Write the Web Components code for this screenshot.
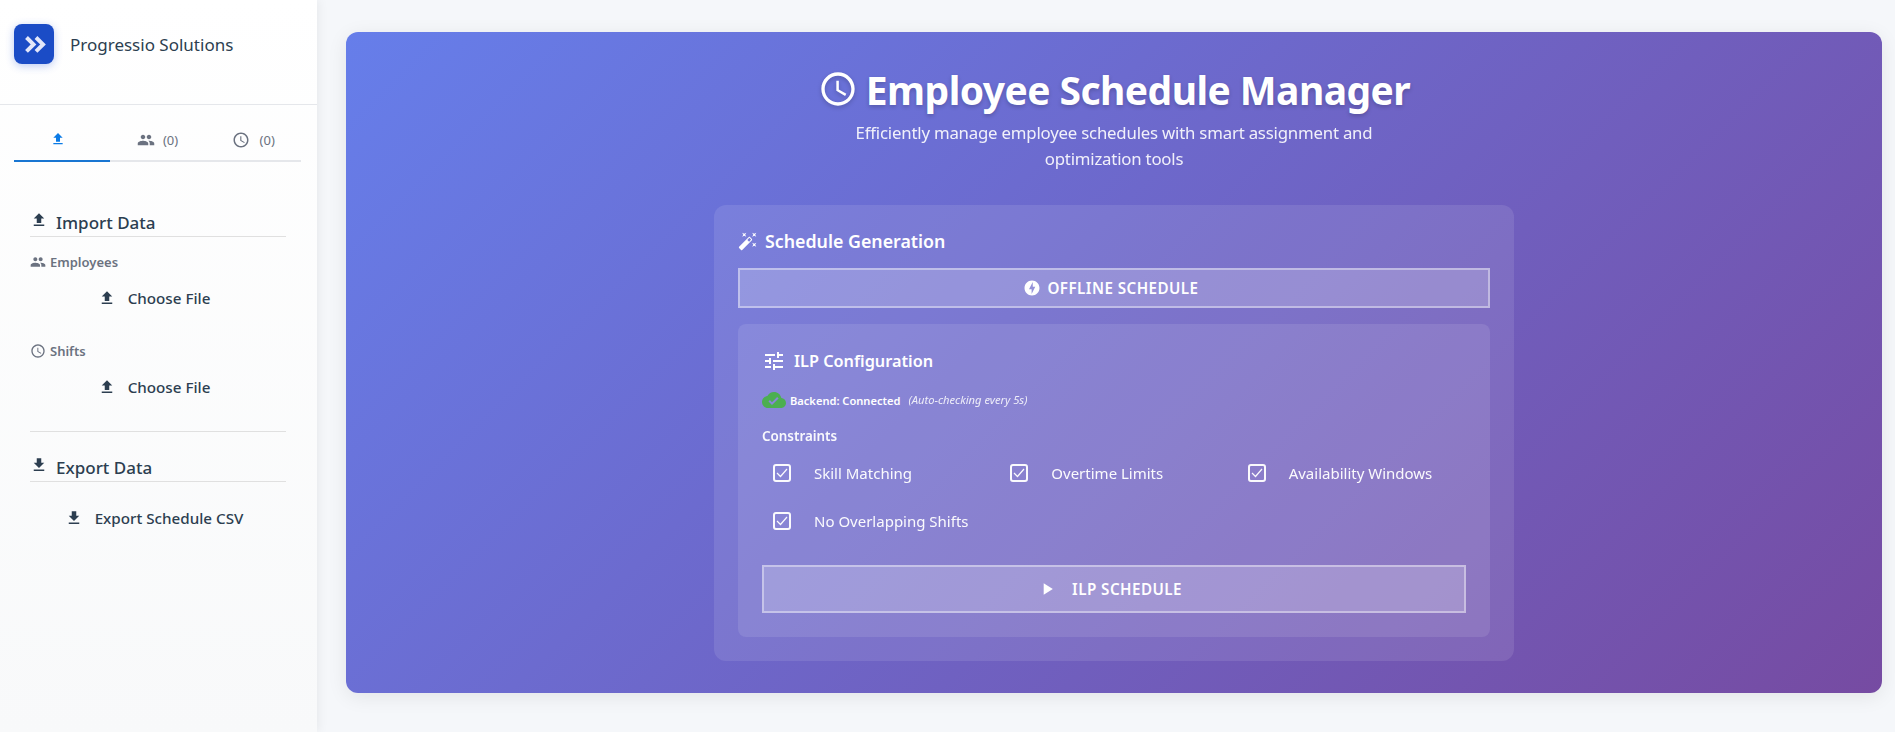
<!DOCTYPE html>
<html>
<head>
<meta charset="utf-8">
<title>Employee Schedule Manager</title>
<style>
    html, body { margin: 0; height: 100%; }
    body {
        font-family: "Noto Sans", "Open Sans", "Liberation Sans", sans-serif;
        color: #2c3e50;
        background: #f5f7fa;
        overflow: hidden;
    }
</style>
</head>
<body>
<schedule-app></schedule-app>

<script>
const ICONS = {
    upload: 'M9 16h6v-6h4l-7-7-7 7h4zm-4 2h14v2H5z',
    download: 'M5 20h14v-2H5v2zM19 9h-4V3H9v6H5l7 7 7-7z',
    people: 'M16 11c1.66 0 2.99-1.34 2.99-3S17.66 5 16 5c-1.66 0-3 1.34-3 3s1.34 3 3 3zm-8 0c1.66 0 2.99-1.34 2.99-3S9.66 5 8 5C6.34 5 5 6.34 5 8s1.34 3 3 3zm0 2c-2.33 0-7 1.17-7 3.5V19h14v-2.5c0-2.33-4.67-3.5-7-3.5zm8 0c-.29 0-.62.02-.97.05 1.16.84 1.97 1.97 1.97 3.45V19h6v-2.5c0-2.33-4.67-3.5-7-3.5z',
    clock: 'M11.99 2C6.47 2 2 6.48 2 12s4.47 10 9.99 10C17.52 22 22 17.52 22 12S17.52 2 11.99 2zM12 20c-4.42 0-8-3.58-8-8s3.58-8 8-8 8 3.58 8 8-3.58 8-8 8zm.5-13H11v6l5.25 3.15.75-1.23-4.5-2.67z',
    wand: 'M7.5 5.6L10 7 8.6 4.5 10 2 7.5 3.4 5 2l1.4 2.5L5 7zm12 9.8L17 14l1.4 2.5L17 19l2.5-1.4L22 19l-1.4-2.5L22 14zM22 2l-2.5 1.4L17 2l1.4 2.5L17 7l2.5-1.4L22 7l-1.4-2.5zm-7.63 5.29c-.39-.39-1.02-.39-1.41 0L1.29 18.96c-.39.39-.39 1.02 0 1.41l2.34 2.34c.39.39 1.02.39 1.41 0L16.7 11.05c.39-.39.39-1.02 0-1.41l-2.33-2.35zm-1.03 5.49l-2.12-2.12 2.44-2.44 2.12 2.12-2.44 2.44z',
    bolt: 'M12 2.02c-5.51 0-9.98 4.47-9.98 9.98s4.47 9.98 9.98 9.98 9.98-4.47 9.98-9.98S17.51 2.02 12 2.02zM11.48 20v-6.26H8L13 4v6.26h3.35L11.48 20z',
    tune: 'M3 17v2h6v-2H3zM3 5v2h10V5H3zm10 16v-2h8v-2h-8v-2h-2v6h2zM7 9v2H3v2h4v2h2V9H7zm14 4v-2H11v2h10zm-6-4h2V7h4V5h-4V3h-2v6z',
    cloud: 'M19.35 10.04C18.67 6.59 15.64 4 12 4 9.11 4 6.6 5.64 5.35 8.04 2.34 8.36 0 10.91 0 14c0 3.31 2.69 6 6 6h13c2.76 0 5-2.24 5-5 0-2.64-2.05-4.78-4.65-4.96zM10 17l-3.5-3.5 1.41-1.41L10 14.17 15.18 9l1.42 1.41L10 17z',
    play: 'M8 5v14l11-7z'
};

class MatIcon extends HTMLElement {
    constructor() {
        super();
        const size = this.getAttribute('size') || 16;
        this.attachShadow({ mode: 'open' });
        this.shadowRoot.innerHTML = `
<style>
    :host { display: inline-flex; flex: none; width: ${size}px; height: ${size}px; }
    svg { width: 100%; height: 100%; fill: currentColor; display: block; }
</style>
<svg viewBox="0 0 24 24"><path d="${ICONS[this.getAttribute('name')]}"></path></svg>`;
    }
}
customElements.define('mat-icon', MatIcon);

class BrandHeader extends HTMLElement {
    constructor() {
        super();
        this.attachShadow({ mode: 'open' });
        this.shadowRoot.innerHTML = `
<style>
    :host { display: flex; align-items: center; gap: 16px; height: 88px; padding: 0 14px 16px; border-bottom: 1px solid #e5e7eb; }
    .logo { width: 40px; height: 40px; border-radius: 8px; background: #1b4cc6; box-shadow: 0 2px 8px rgba(29, 78, 216, .3); display: flex; }
    .name { font-size: 17px; color: #2c3e50; }
    svg { display: block; }
</style>
<div class="logo">
    <svg width="40" height="40" viewBox="0 0 40 40" fill="none" stroke="#e3e7fa" stroke-width="4">
        <polyline points="12.5,13.5 19.5,20.4 12.5,27.3"></polyline>
        <polyline points="22,13.5 29,20.4 22,27.3"></polyline>
    </svg>
</div>
<div class="name"><slot></slot></div>`;
    }
}
customElements.define('brand-header', BrandHeader);

class SideTab extends HTMLElement {
    constructor() {
        super();
        this.attachShadow({ mode: 'open' });
        this.shadowRoot.innerHTML = `
<style>
    :host { display: flex; flex: 1 1 0; align-items: center; justify-content: center; gap: 8px; box-sizing: border-box; height: 57px; padding-top: 15px; margin-bottom: -2px; border-bottom: 2px solid transparent; font-size: 13px; color: #6b7280; }
    :host([active]) { color: #0b7be6; border-bottom-color: #1976d2; }
    :host([active]) ::slotted(mat-icon) { margin: -3px 8px 0 0; }
    ::slotted(mat-icon[name="clock"]) { margin-right: 2px; }
</style>
<slot></slot>`;
    }
}
customElements.define('side-tab', SideTab);

class SectionTitle extends HTMLElement {
    constructor() {
        super();
        this.attachShadow({ mode: 'open' });
        this.shadowRoot.innerHTML = `
<style>
    :host { display: flex; align-items: center; gap: 8px; height: 28px; padding-top: 3px; border-bottom: 1px solid #e0e0e0; font-size: 17px; font-weight: 500; color: #2c3e50; }
    ::slotted(mat-icon) { margin-top: -5px; }
</style>
<slot></slot>`;
    }
}
customElements.define('section-title', SectionTitle);

class FieldLabel extends HTMLElement {
    constructor() {
        super();
        this.attachShadow({ mode: 'open' });
        this.shadowRoot.innerHTML = `
<style>
    :host { display: flex; align-items: center; gap: 4px; height: 18px; font-size: 13px; font-weight: 600; color: #6b7280; }
</style>
<slot></slot>`;
    }
}
customElements.define('field-label', FieldLabel);

class SideButton extends HTMLElement {
    constructor() {
        super();
        this.attachShadow({ mode: 'open' });
        this.shadowRoot.innerHTML = `
<style>
    :host { display: flex; align-items: center; justify-content: center; gap: 12px; height: 36px; padding-right: 8px; font-size: 15.2px; font-weight: 500; color: #2c3e50; }
</style>
<slot></slot>`;
    }
}
customElements.define('side-button', SideButton);

class AppSidebar extends HTMLElement {
    constructor() {
        super();
        this.attachShadow({ mode: 'open' });
        this.shadowRoot.innerHTML = `
<style>
    :host { display: block; flex: none; width: 317px; height: 100%; background: linear-gradient(180deg, #ffffff 0%, #f8f9fa 100%); box-shadow: 2px 0 10px rgba(0, 0, 0, .06); position: relative; }
    .tabs { display: flex; margin: 0 16px 0 14px; border-bottom: 2px solid #e5e7eb; }
    .body { padding: 43px 31px 0 30px; }
    .employees { margin-top: 16px; }
    .pick { margin-top: 9px; }
    .shifts { margin-top: 26px; }
    hr { border: 0; border-top: 1px solid #e0e0e0; margin: 26px 0 18px; }
    .export { margin-top: 18px; }
</style>
<brand-header>Progressio Solutions</brand-header>
<div class="tabs">
    <side-tab active><mat-icon name="upload" size="16"></mat-icon></side-tab>
    <side-tab><mat-icon name="people" size="18"></mat-icon>(0)</side-tab>
    <side-tab><mat-icon name="clock" size="18"></mat-icon>(0)</side-tab>
</div>
<div class="body">
    <section-title><mat-icon name="upload" size="18"></mat-icon>Import Data</section-title>
    <field-label class="employees"><mat-icon name="people" size="16"></mat-icon>Employees</field-label>
    <side-button class="pick"><mat-icon name="upload" size="18"></mat-icon>Choose File</side-button>
    <field-label class="shifts"><mat-icon name="clock" size="16"></mat-icon>Shifts</field-label>
    <side-button class="pick"><mat-icon name="upload" size="18"></mat-icon>Choose File</side-button>
    <hr>
    <section-title><mat-icon name="download" size="18"></mat-icon>Export Data</section-title>
    <side-button class="export"><mat-icon name="download" size="18"></mat-icon>Export Schedule CSV</side-button>
</div>`;
    }
}
customElements.define('app-sidebar', AppSidebar);

class OutlineButton extends HTMLElement {
    constructor() {
        super();
        this.attachShadow({ mode: 'open' });
        this.shadowRoot.innerHTML = `
<style>
    :host { display: flex; align-items: center; justify-content: center; gap: 6px; box-sizing: border-box; height: 40px; padding-right: 6px; background: rgba(255, 255, 255, .2); border: 2px solid rgba(255, 255, 255, .4); font-size: 15.2px; font-weight: 600; letter-spacing: .45px; color: #fff; }
</style>
<slot></slot>`;
    }
}
customElements.define('outline-button', OutlineButton);

class CheckItem extends HTMLElement {
    constructor() {
        super();
        this.attachShadow({ mode: 'open' });
        this.shadowRoot.innerHTML = `
<style>
    :host { display: flex; align-items: center; gap: 23px; height: 48px; padding-left: 11px; font-size: 15px; color: #fff; opacity: .96; }
    svg { display: block; flex: none; }
</style>
<svg width="18" height="18" viewBox="0 0 18 18" fill="none" stroke="#fff">
    <rect x="1" y="1" width="16" height="16" rx="2" stroke-width="2"></rect>
    <polyline points="4,9 7.5,12.5 14,5" stroke-width="1.2"></polyline>
</svg>
<slot></slot>`;
    }
}
customElements.define('check-item', CheckItem);

class IlpPanel extends HTMLElement {
    constructor() {
        super();
        this.attachShadow({ mode: 'open' });
        this.shadowRoot.innerHTML = `
<style>
    :host { display: block; margin-top: 16px; padding: 24px; border-radius: 8px; background: rgba(255, 255, 255, .1); color: #fff; text-align: left; }
    h3 { display: flex; align-items: center; gap: 8px; margin: 0; height: 26px; font-size: 16.3px; font-weight: 600; }
    .status { display: flex; align-items: center; margin-top: 16px; height: 20px; font-size: 11.1px; font-weight: 600; gap: 4px; }
    .status mat-icon { color: #4caf50; }
    .status i { font-weight: 400; font-size: 11.2px; margin-left: 4px; opacity: .85; position: relative; top: -1px; }
    .constraints { margin: 16px 0 0; font-size: 13.4px; font-weight: 600; opacity: .95; height: 20px; line-height: 20px; }
    .grid { display: grid; grid-template-columns: repeat(3, 1fr); column-gap: 8px; margin-top: 3px; }
    outline-button { height: 48px; margin-top: 20px; gap: 15px; padding-right: 9px; }
</style>
<h3><mat-icon name="tune" size="24"></mat-icon>ILP Configuration</h3>
<div class="status"><mat-icon name="cloud" size="24"></mat-icon>Backend: Connected <i>(Auto-checking every 5s)</i></div>
<div class="constraints">Constraints</div>
<div class="grid">
    <check-item>Skill Matching</check-item>
    <check-item>Overtime Limits</check-item>
    <check-item>Availability Windows</check-item>
    <check-item>No Overlapping Shifts</check-item>
</div>
<outline-button><mat-icon name="play" size="20"></mat-icon>ILP SCHEDULE</outline-button>`;
    }
}
customElements.define('ilp-panel', IlpPanel);

class SchedulePanel extends HTMLElement {
    constructor() {
        super();
        this.attachShadow({ mode: 'open' });
        this.shadowRoot.innerHTML = `
<style>
    :host { display: block; width: 800px; box-sizing: border-box; margin: 33px auto 0; padding: 24px; border-radius: 12px; background: rgba(255, 255, 255, .1); color: #fff; text-align: left; }
    h2 { display: flex; align-items: center; gap: 7px; margin: 0 0 15px; height: 24px; font-size: 17.8px; font-weight: 600; }
</style>
<h2><mat-icon name="wand" size="20"></mat-icon>Schedule Generation</h2>
<outline-button><mat-icon name="bolt" size="18"></mat-icon>OFFLINE SCHEDULE</outline-button>
<ilp-panel></ilp-panel>`;
    }
}
customElements.define('schedule-panel', SchedulePanel);

class HeroCard extends HTMLElement {
    constructor() {
        super();
        this.attachShadow({ mode: 'open' });
        this.shadowRoot.innerHTML = `
<style>
    :host { display: block; box-sizing: border-box; height: 661px; padding-top: 32px; border-radius: 12px; background: linear-gradient(135deg, #667eea 0%, #764ba2 100%); color: #fff; text-align: center; box-shadow: 0 4px 20px rgba(0, 0, 0, .08); }
    h1 { display: flex; align-items: center; justify-content: center; gap: 8px; margin: 0; height: 50px; font-size: 39px; letter-spacing: -.55px; font-weight: 700; text-shadow: 0 2px 4px rgba(0, 0, 0, .2); }
    mat-icon { filter: drop-shadow(0 2px 2px rgba(0, 0, 0, .2)); }
    p { width: 540px; margin: 6px auto 0; font-size: 16.8px; letter-spacing: -.2px; line-height: 26px; opacity: .9; }
</style>
<h1><mat-icon name="clock" size="40"></mat-icon>Employee Schedule Manager</h1>
<p>Efficiently manage employee schedules with smart assignment and optimization tools</p>
<schedule-panel></schedule-panel>`;
    }
}
customElements.define('hero-card', HeroCard);

class ScheduleApp extends HTMLElement {
    constructor() {
        super();
        this.attachShadow({ mode: 'open' });
        this.shadowRoot.innerHTML = `
<style>
    :host { display: flex; height: 732px; }
    main { flex: 1; min-width: 0; padding: 32px 13px 0 29px; }
</style>
<app-sidebar></app-sidebar>
<main><hero-card></hero-card></main>`;
    }
}
customElements.define('schedule-app', ScheduleApp);
</script>
</body>
</html>
